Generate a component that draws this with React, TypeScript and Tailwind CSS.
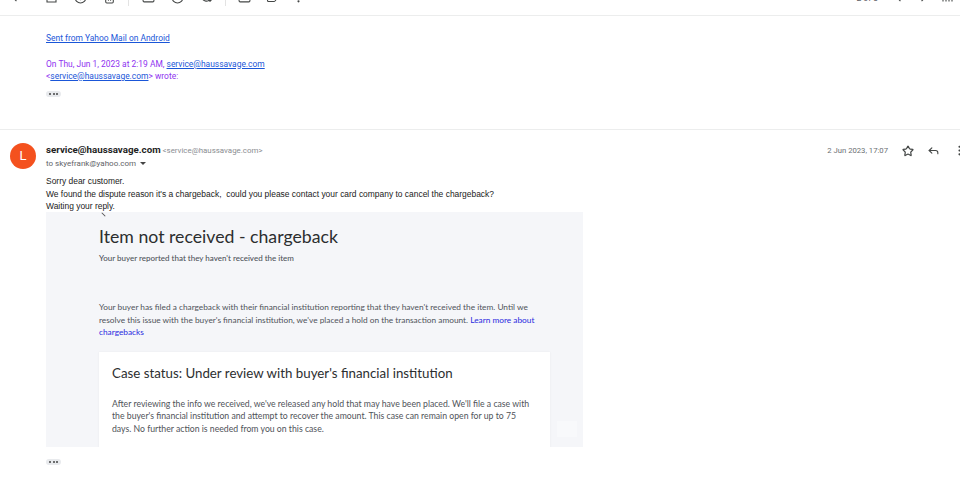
import React from 'react';
import { ChevronLeft, ChevronRight, Clock, CircleAlert, EllipsisVertical, Inbox, Mail, Reply, Star, Trash2 } from 'lucide-react';

const Dots = () => (
  <div className="flex h-[6px] w-[15px] items-center justify-center gap-[1.5px] rounded-full bg-[#e8eaed]">
    <span className="h-[2px] w-[2px] rounded-full bg-[#444]" />
    <span className="h-[2px] w-[2px] rounded-full bg-[#444]" />
    <span className="h-[2px] w-[2px] rounded-full bg-[#444]" />
  </div>
);

const ToolIcon = ({ children, className }: { children: React.ReactNode; className: string }) => (
  <div className={`flex h-[15px] shrink-0 items-end overflow-hidden ${className}`}>
    <div className="mb-[11px] shrink-0 text-[#444746]">{children}</div>
  </div>
);

const Divider = () => <div className="h-[6px] w-[1px] shrink-0 bg-[#e3e3e3]" />;

// bottom edge of a box with a dot in it, the rest is scrolled out of view
const ArchiveIcon = () => (
  <svg width="13" height="13" viewBox="0 0 13 13" fill="none" stroke="currentColor" strokeWidth="1.1">
    <path d="M2 2v9h9V2" />
    <path d="M6.5 5v3M4.5 7h4" />
  </svg>
);

const AddTaskIcon = () => (
  <svg width="13" height="13" viewBox="0 0 13 13" fill="none" stroke="currentColor" strokeWidth="1.1">
    <path d="M10.5 7.5A4.5 4.5 0 0 1 2 6.500" />
    <path d="M2 6.500A4.500 4.500 0 0 1 8 2.200" />
    <path d="M10 8v3M8.500 9.500h3" />
  </svg>
);

const LabelIcon = () => (
  <svg width="13" height="13" viewBox="0 0 13 13" fill="none" stroke="currentColor" strokeWidth="1.1">
    <path d="M1.500 2v7.500q0 1 1 1H8q.6 0 1-.5l3-4" />
  </svg>
);

const ViewTicks = () => (
  <svg width="13" height="13" viewBox="0 0 13 13" fill="none" stroke="currentColor" strokeWidth="1.1">
    <path d="M2 4v6.500M5 4v6.500M8 4v6.500M11 4v6.500" />
  </svg>
);

const Toolbar = () => (
  <div className="flex h-[16px] items-start border-b border-[#eceded] text-[#444746]">
    <ToolIcon className="ml-[8px] w-[37px]"><ChevronLeft size={13} /></ToolIcon>
    <ToolIcon className="w-[29px]"><ArchiveIcon /></ToolIcon>
    <ToolIcon className="w-[29px]"><CircleAlert size={13} /></ToolIcon>
    <ToolIcon className="w-[25px]"><Trash2 size={13} /></ToolIcon>
    <Divider />
    <ToolIcon className="ml-[13px] w-[29px]"><Mail size={13} /></ToolIcon>
    <ToolIcon className="w-[29px]"><Clock size={13} /></ToolIcon>
    <ToolIcon className="w-[25px]"><AddTaskIcon /></ToolIcon>
    <Divider />
    <ToolIcon className="ml-[12px] w-[28px]"><Inbox size={13} /></ToolIcon>
    <ToolIcon className="w-[26px]"><LabelIcon /></ToolIcon>
    <ToolIcon className="w-[20px]"><EllipsisVertical size={13} /></ToolIcon>
    <div className="ml-auto flex h-[15px] items-start overflow-hidden">
      <span className="mt-[-8px] mr-[14px] text-[8.5px] leading-[13px] text-[#5f6368]">2 of 3</span>
      <ToolIcon className="w-[25px]"><ChevronLeft size={13} /></ToolIcon>
      <ToolIcon className="w-[24px]"><ChevronRight size={13} /></ToolIcon>
      <ToolIcon className="w-[19px]"><ViewTicks /></ToolIcon>
    </div>
  </div>
);

const QuotedMessage = () => (
  <div className="h-[114px] border-b border-[#eceded] pl-[46px] pt-[16px] text-[8.45px] leading-[12.5px]">
    <a className="text-[#1a56d8] underline">Sent from Yahoo Mail on Android</a>
    <p className="mt-[13px] text-[#8f33f0]">
      On Thu, Jun 1, 2023 at 2:19 AM, <a className="text-[#1a56d8] underline">service@haussavage.com</a>
    </p>
    <p className="text-[#8f33f0]">
      &lt;<a className="text-[#1a56d8] underline">service@haussavage.com</a>&gt; wrote:
    </p>
    <div className="mt-[8px]"><Dots /></div>
  </div>
);

const PaypalNotice = () => (
  <div className="relative ml-[46px] h-[235px] w-[537px] overflow-hidden bg-[#f5f6f9] pl-[53px] pr-[33px] pt-[13px] font-['Lato',sans-serif] text-[#4f5359]">
    <span className="absolute left-[55px] top-[2px] h-[1px] w-[5px] rotate-45 bg-[#555]" />
    <h2 className="text-[17.7px] leading-[24px] text-[#2c2e2f]">Item not received - chargeback</h2>
    <p className="mt-[3px] text-[8px] font-medium leading-[13px]">Your buyer reported that they haven't received the item</p>
    <p className="mt-[36px] text-[8.3px] leading-[12.5px]">
      Your buyer has filed a chargeback with their financial institution reporting that they haven't received the item. Until we
      <br />
      resolve this issue with the buyer's financial institution, we've placed a hold on the transaction amount. <span className="text-[#2a2ae0]">Learn more about</span>
      <br />
      <span className="text-[#2a2ae0]">chargebacks</span>
    </p>
    <div className="mt-[13px] h-[110px] bg-white px-[13px] pt-[13px] shadow-[0_0_2px_rgba(0,0,0,0.06)]">
      <h3 className="text-[13.3px] leading-[17px] text-[#2c2e2f]">Case status: Under review with buyer's financial institution</h3>
      <p className="mt-[16px] text-[8.7px] leading-[12.5px]">
        After reviewing the info we received, we've released any hold that may have been placed. We'll file a case with
        <br />
        the buyer's financial institution and attempt to recover the amount. This case can remain open for up to 75
        <br />
        days. No further action is needed from you on this case.
      </p>
    </div>
    <span className="absolute left-[511px] top-[209px] h-[16px] w-[20px] bg-white/30" />
  </div>
);

const MessageHeader = () => (
  <div className="flex h-[44px] pl-[10px] pt-[13px]">
    <div className="flex h-[26px] w-[26px] items-center justify-center rounded-full bg-[#f4511e] text-[13px] text-white">L</div>
    <div className="ml-[10px]">
      <p className="text-[7.9px] leading-[13px] text-[#8a8d91]">
        <span className="text-[9.75px] font-bold text-[#1f1f1f]">service@haussavage.com</span> &lt;service@haussavage.com&gt;
      </p>
      <p className="flex items-center text-[8px] leading-[13px] text-[#5f6368]">
        to skyefrank@yahoo.com
        <span className="ml-[4px] h-0 w-0 border-x-[3px] border-t-[3px] border-x-transparent border-t-[#444]" />
      </p>
    </div>
    <div className="ml-auto mt-[1px] flex h-[13px] items-center text-[#444746]">
      <span className="mr-[14px] text-[7.7px] text-[#6b6f73]">2 Jun 2023, 17:07</span>
      <Star size={12} strokeWidth={2.4} className="mr-[13px]" />
      <Reply size={13} className="mr-[13px]" />
      <EllipsisVertical size={13} className="mr-[-6px]" />
    </div>
  </div>
);

export default function App() {
  return (
    <div className="h-[482px] w-[960px] overflow-hidden bg-white font-['Roboto','Liberation_Sans',sans-serif]">
      <Toolbar />
      <QuotedMessage />
      <MessageHeader />
      <div className="h-[38px] pl-[46px] pt-[1px] text-[8.45px] leading-[12.5px] text-[#222] font-['Liberation_Sans',sans-serif]">
        <p>Sorry dear customer.</p>
        <p>We found the dispute reason it's a chargeback,&nbsp; could you please contact your card company to cancel the chargeback?</p>
        <p>Waiting your reply.</p>
      </div>
      <PaypalNotice />
      <div className="ml-[46px] mt-[12px]"><Dots /></div>
    </div>
  );
}
